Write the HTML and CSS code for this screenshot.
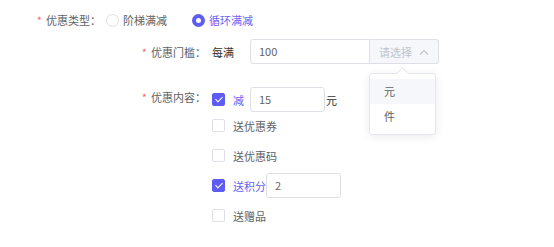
FILE: index.html
```html
<!DOCTYPE html>
<html lang="zh-CN">
<head>
    <meta charset="UTF-8">
    <meta name="viewport" content="width=device-width, initial-scale=1.0">
    <title>优惠设置</title>
    <link rel="stylesheet" href="styles.css">
</head>
<body>
    <div class="form">
        <div class="row row-type">
            <div class="label label-short"><span class="star">*</span>优惠类型：</div>
            <div class="radios">
                <label class="radio">
                    <span class="radio-dot"></span>
                    <span class="radio-text">阶梯满减</span>
                </label>
                <label class="radio checked">
                    <span class="radio-dot"></span>
                    <span class="radio-text">循环满减</span>
                </label>
            </div>
        </div>

        <div class="row row-threshold">
            <div class="label label-long"><span class="star">*</span>优惠门槛：</div>
            <div class="content">
                <span class="prefix">每满</span>
                <div class="input-group">
                    <div class="input input-main">100</div>
                    <div class="addon">
                        <span class="placeholder">请选择</span>
                        <svg class="chevron" width="10" height="6" viewBox="0 0 10 6">
                            <polyline points="1,5.5 5,1.5 9,5.5" fill="none" stroke="#c0c4cc" stroke-width="1.1"/>
                        </svg>
                    </div>
                    <div class="dropdown">
                        <div class="dropdown-item active">元</div>
                        <div class="dropdown-item">件</div>
                    </div>
                </div>
            </div>
        </div>

        <div class="row row-content">
            <div class="label label-long label-top"><span class="star">*</span>优惠内容：</div>
            <div class="options">
                <div class="opt">
                    <span class="checkbox checked"></span>
                    <span class="opt-text active">减</span>
                    <div class="input input-small">15</div>
                    <span class="unit">元</span>
                </div>
                <div class="opt tight">
                    <span class="checkbox"></span>
                    <span class="opt-text">送优惠券</span>
                </div>
                <div class="opt">
                    <span class="checkbox"></span>
                    <span class="opt-text">送优惠码</span>
                </div>
                <div class="opt">
                    <span class="checkbox checked"></span>
                    <span class="opt-text active flush">送积分</span>
                    <div class="input input-small">2</div>
                </div>
                <div class="opt">
                    <span class="checkbox"></span>
                    <span class="opt-text">送赠品</span>
                </div>
            </div>
        </div>
    </div>
</body>
</html>
```

FILE: styles.css
```css
* {
    margin: 0;
    padding: 0;
    box-sizing: border-box;
}

body {
    font-family: "Noto Sans CJK SC", "Noto Sans", sans-serif;
    font-size: 11px;
    color: #606266;
    background: #ffffff;
}

.form {
    padding-top: 8px;
}

.row {
    display: flex;
    align-items: center;
}

.label {
    text-align: right;
    color: #606266;
    flex-shrink: 0;
}

.label-short {
    width: 101px;
}

.label-long {
    width: 206px;
}

.label-top {
    align-self: flex-start;
    line-height: 20px;
}

.star {
    color: #f56c6c;
    margin-right: 4px;
}

.row-type {
    height: 24px;
}

.radios {
    display: flex;
    align-items: center;
    gap: 25px;
    margin-left: 5px;
}

.radio {
    display: flex;
    align-items: center;
    gap: 4px;
}

.radio-dot {
    width: 13px;
    height: 13px;
    border-radius: 50%;
    border: 1px solid #dcdfe6;
    background: #ffffff;
}

.radio.checked .radio-dot {
    border: 4px solid #5f5cf3;
}

.radio.checked .radio-text {
    color: #6a63f5;
}

.row-threshold {
    margin-top: 7px;
}

.content {
    display: flex;
    align-items: center;
    margin-left: 6px;
}

.prefix {
    color: #303133;
    margin-right: 16px;
}

.input-group {
    display: flex;
    position: relative;
}

.input {
    height: 25px;
    border: 1px solid #dcdfe6;
    border-radius: 3px;
    line-height: 23px;
    padding-left: 8px;
    color: #606266;
    background: #ffffff;
}

.input-main {
    width: 120px;
    border-radius: 3px 0 0 3px;
}

.addon {
    width: 69px;
    height: 25px;
    border: 1px solid #dcdfe6;
    border-left: none;
    border-radius: 0 3px 3px 0;
    background: #f5f7fa;
    display: flex;
    align-items: center;
    justify-content: space-between;
    padding: 0 9px 0 9px;
}

.placeholder {
    color: #c0c4cc;
}

.chevron {
    display: block;
}

.dropdown {
    position: absolute;
    top: 34px;
    left: 119px;
    width: 67px;
    padding: 5px 0;
    background: #ffffff;
    border: 1px solid #e4e7ed;
    border-radius: 3px;
    box-shadow: 0 2px 10px rgba(0, 0, 0, 0.08);
}

.dropdown::before {
    content: "";
    position: absolute;
    top: -5px;
    left: 28px;
    width: 8px;
    height: 8px;
    background: #ffffff;
    border-top: 1px solid #e4e7ed;
    border-left: 1px solid #e4e7ed;
    transform: rotate(45deg);
}

.dropdown-item {
    height: 25px;
    line-height: 25px;
    padding-left: 14px;
    color: #606266;
}

.dropdown-item.active {
    background: #f5f7fa;
}

.row-content {
    margin-top: 23px;
    align-items: flex-start;
}

.options {
    display: flex;
    flex-direction: column;
    margin-left: 6px;
}

.opt {
    display: flex;
    align-items: center;
    height: 25px;
    margin-top: 5px;
}

.opt:first-child {
    margin-top: 0;
}

.opt.tight {
    margin-top: 1px;
}

.checkbox {
    width: 13px;
    height: 13px;
    border: 1px solid #dcdfe6;
    border-radius: 2px;
    background: #ffffff;
    position: relative;
    flex-shrink: 0;
}

.checkbox.checked {
    background: #5f5cf3;
    border-color: #5f5cf3;
}

.checkbox.checked::after {
    content: "";
    position: absolute;
    left: 3.5px;
    top: 1px;
    width: 3px;
    height: 6px;
    border-right: 1.5px solid #ffffff;
    border-bottom: 1.5px solid #ffffff;
    transform: rotate(45deg);
}

.opt-text {
    margin-left: 8px;
    color: #606266;
}

.opt-text.active {
    color: #6a63f5;
    margin-right: 6px;
}

.opt-text.flush {
    margin-right: 0;
}

.input-small {
    width: 75px;
}

.unit {
    color: #303133;
    margin-left: 1px;
}
```
